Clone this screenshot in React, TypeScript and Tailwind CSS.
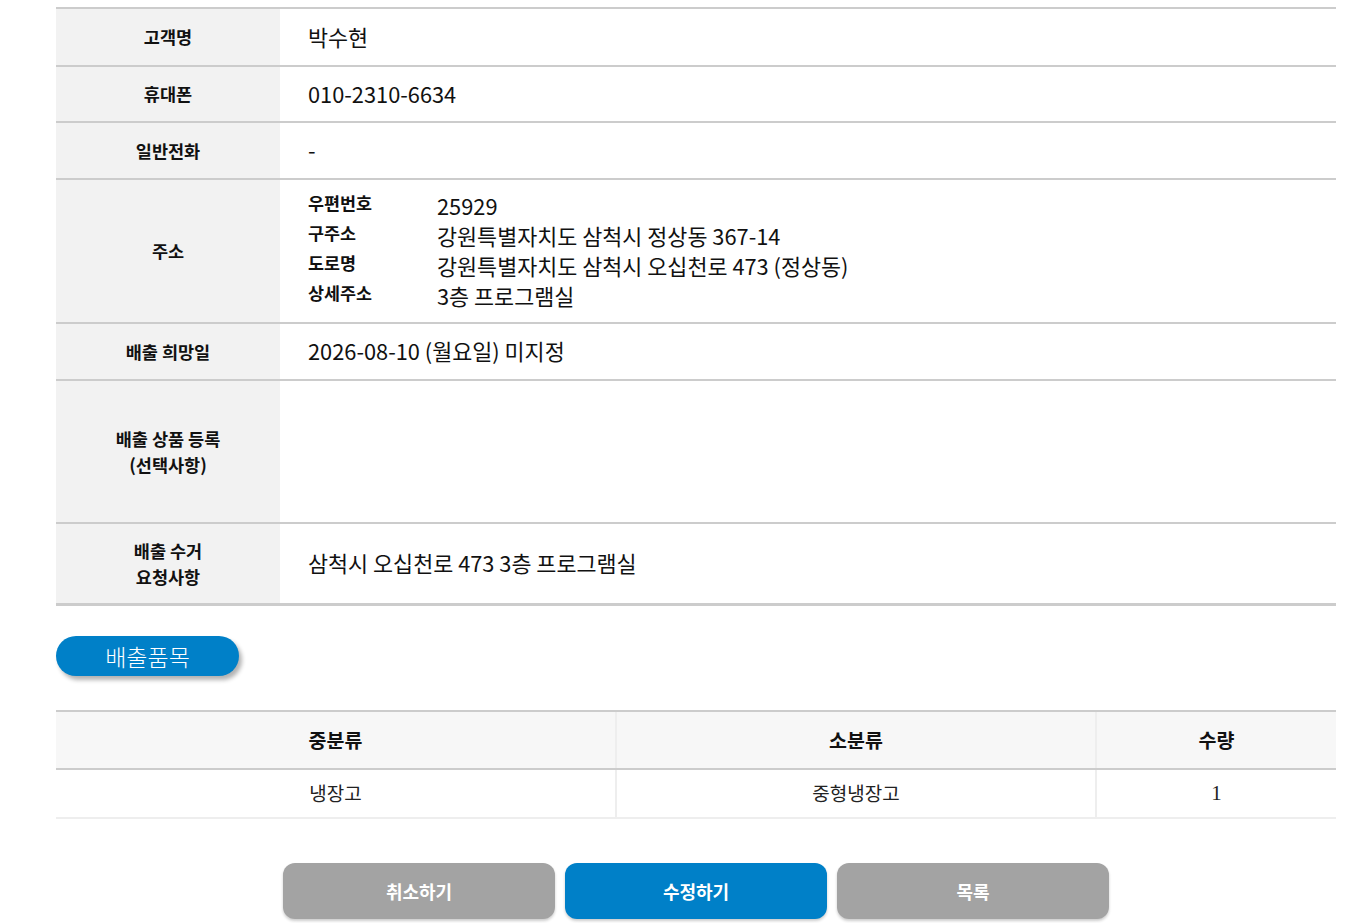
import type { ReactNode } from 'react'

const font = { fontFamily: '"Noto Sans CJK KR", "Noto Sans", sans-serif' }

type RowProps = {
  label: ReactNode
  height: string
  children?: ReactNode
  last?: boolean
}

function InfoRow({ label, height, children, last }: RowProps) {
  return (
    <div className={`flex ${height} ${last ? 'border-b-[3px]' : 'border-b-2'} border-[#cccccc]`}>
      <div className="flex w-[224px] shrink-0 items-center justify-center bg-[#f2f2f2] text-center text-[17.5px] font-bold leading-[26px] text-[#111]">
        {label}
      </div>
      <div className="flex flex-1 items-center pl-[28px] text-[21.8px] text-[#111]">{children}</div>
    </div>
  )
}

const address = [
  ['우편번호', '25929'],
  ['구주소', '강원특별자치도 삼척시 정상동 367-14'],
  ['도로명', '강원특별자치도 삼척시 오십천로 473 (정상동)'],
  ['상세주소', '3층 프로그램실'],
]

export default function App() {
  return (
    <div className="min-h-screen bg-white" style={font}>
      <div className="ml-[56px] w-[1280px] pt-[7px]">
        <div className="border-t-2 border-[#cccccc]">
          <InfoRow label="고객명" height="h-[58px]">박수현</InfoRow>
          <InfoRow label="휴대폰" height="h-[56px]">010-2310-6634</InfoRow>
          <InfoRow label="일반전화" height="h-[57px]">-</InfoRow>
          <InfoRow label="주소" height="h-[144px]">
            <div className="flex flex-col">
              {address.map(([k, v]) => (
                <div key={k} className="flex h-[30px] items-center">
                  <span className="mb-[6px] w-[129px] text-[17.4px] font-bold">{k}</span>
                  <span>{v}</span>
                </div>
              ))}
            </div>
          </InfoRow>
          <InfoRow label="배출 희망일" height="h-[57px]">2026-08-10 (월요일) 미지정</InfoRow>
          <InfoRow
            label={
              <span>
                배출 상품 등록
                <br />
                (선택사항)
              </span>
            }
            height="h-[143px]"
          />
          <InfoRow
            label={
              <span>
                배출 수거
                <br />
                요청사항
              </span>
            }
            height="h-[82px]"
            last
          >
            삼척시 오십천로 473 3층 프로그램실
          </InfoRow>
        </div>

        <div className="mt-[30px] flex h-[40px] w-[183px] items-center justify-center rounded-full bg-[#0080c8] text-[23px] font-light text-white shadow-[3px_4px_4px_rgba(0,0,0,0.3)]">
          배출품목
        </div>

        <div className="mt-[34px] border-t-2 border-[#cccccc]">
          <div className="flex h-[58px] border-b-2 border-[#cccccc] bg-[#f7f7f7] text-[19.5px] font-bold text-[#111]">
            <div className="flex w-[561px] items-center justify-center border-r-2 border-[#eeeeee]">중분류</div>
            <div className="flex w-[480px] items-center justify-center border-r-2 border-[#eeeeee]">소분류</div>
            <div className="flex flex-1 items-center justify-center">수량</div>
          </div>
          <div className="flex h-[49px] border-b-2 border-[#eeeeee] text-[19px] text-[#222]">
            <div className="flex w-[561px] items-center justify-center border-r-2 border-[#eeeeee]">냉장고</div>
            <div className="flex w-[480px] items-center justify-center border-r-2 border-[#eeeeee]">중형냉장고</div>
            <div
              className="flex flex-1 items-center justify-center text-[21px]"
              style={{ fontFamily: '"Liberation Serif", serif' }}
            >
              1
            </div>
          </div>
        </div>

        <div className="mt-[44px] flex justify-center gap-[10px] pb-[5px]">
          <button className="h-[56px] w-[272px] rounded-[12px] bg-[#a3a3a3] text-[18px] font-bold text-white shadow-[0_2px_3px_rgba(0,0,0,0.2)]">
            취소하기
          </button>
          <button className="h-[56px] w-[262px] rounded-[12px] bg-[#0080c8] text-[18px] font-bold text-white shadow-[0_2px_3px_rgba(0,0,0,0.2)]">
            수정하기
          </button>
          <button className="h-[56px] w-[272px] rounded-[12px] bg-[#a3a3a3] text-[18px] font-bold text-white shadow-[0_2px_3px_rgba(0,0,0,0.2)]">
            목록
          </button>
        </div>
      </div>
    </div>
  )
}
